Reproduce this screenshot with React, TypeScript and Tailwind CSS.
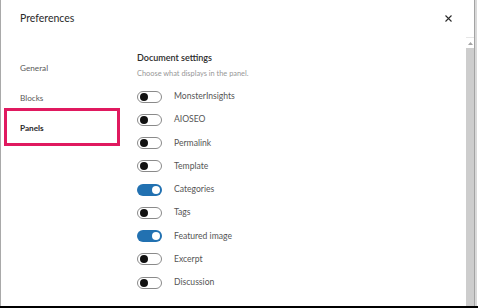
import React from "react";

const items = [
  { label: "MonsterInsights", on: false },
  { label: "AIOSEO", on: false },
  { label: "Permalink", on: false },
  { label: "Template", on: false },
  { label: "Categories", on: true },
  { label: "Tags", on: false },
  { label: "Featured image", on: true },
  { label: "Excerpt", on: false },
  { label: "Discussion", on: false },
];

const Toggle = ({ on }: { on: boolean }) =>
  on ? (
    <span className="flex items-center justify-end w-[25px] h-[12px] rounded-full bg-[#2271b1] pr-[2px]">
      <span className="w-[8px] h-[8px] rounded-full bg-white" />
    </span>
  ) : (
    <span className="flex items-center w-[25px] h-[12px] rounded-full border border-[#8a8a8a] bg-white pl-[2px]">
      <span className="w-[8px] h-[8px] rounded-full bg-[#111]" />
    </span>
  );

export default function App() {
  return (
    <div className="w-[478px] h-[308px] bg-white flex flex-col overflow-hidden" style={{ fontFamily: "Lato, 'Open Sans', sans-serif" }}>
      <div className="flex h-[306px]">
        {/* modal */}
        <div className="flex-1 flex flex-col border-l border-[#a9a9a9]">
          {/* Header */}
          <div className="h-[37px] flex items-center justify-between pl-[19px] pr-[22px]">
            <h1 className="text-[10.5px] text-[#2a2a2a]">Preferences</h1>
            <svg width="7" height="7" viewBox="0 0 7 7" className="mt-[-1px]">
              <path d="M0.5 0.5L6.5 6.5M6.5 0.5L0.5 6.5" stroke="#2a2a2a" strokeWidth="1.1" />
            </svg>
          </div>

          <div className="flex flex-1 min-h-0">
            {/* Nav */}
            <nav className="w-[119px] pt-[16px] text-[8.2px] text-[#5a5a5a]">
              <div className="h-[30px] flex items-center pl-[19px]">General</div>
              <div className="h-[25px] pt-[5px] flex items-center pl-[19px]">Blocks</div>
              <div className="ml-[3px] w-[116px] h-[38px] border-[3px] border-[#e0195f] flex items-center pl-[13px] pt-[3px] font-bold text-[#2a2a2a]">
                Panels
              </div>
            </nav>

            {/* Content */}
            <div className="flex-1 pl-[17px] pt-[13px]">
              <h2 className="text-[9px] leading-[16px] font-semibold text-[#2a2a2a]">Document settings</h2>
              <p className="mt-[2px] text-[7.4px] leading-[12px] text-[#979797]">Choose what displays in the panel.</p>
              <ul className="mt-[5px]">
                {items.map((it) => (
                  <li key={it.label} className="h-[23.25px] flex items-center">
                    <Toggle on={it.on} />
                    <span className="ml-[12px] text-[8.6px] text-[#555]">{it.label}</span>
                  </li>
                ))}
              </ul>
            </div>

            {/* Scrollbar */}
            <div className="w-[8px] flex flex-col border-t border-[#e6e6e6]">
              <div className="h-[10px] flex items-center justify-center bg-white">
                <svg width="5" height="3" viewBox="0 0 5 3">
                  <path d="M0 3L2.5 0L5 3Z" fill="#a3a3a3" />
                </svg>
              </div>
              <div className="flex-1 bg-[#cdcdcd]" />
            </div>
          </div>
        </div>
        {/* right edge */}
        <div className="w-px bg-[#a3a3a3]" />
        <div className="w-[2px] bg-[#d9d9d9]" />
        <div className="w-px bg-white" />
      </div>
      <div className="h-[2px] bg-black" />
    </div>
  );
}
